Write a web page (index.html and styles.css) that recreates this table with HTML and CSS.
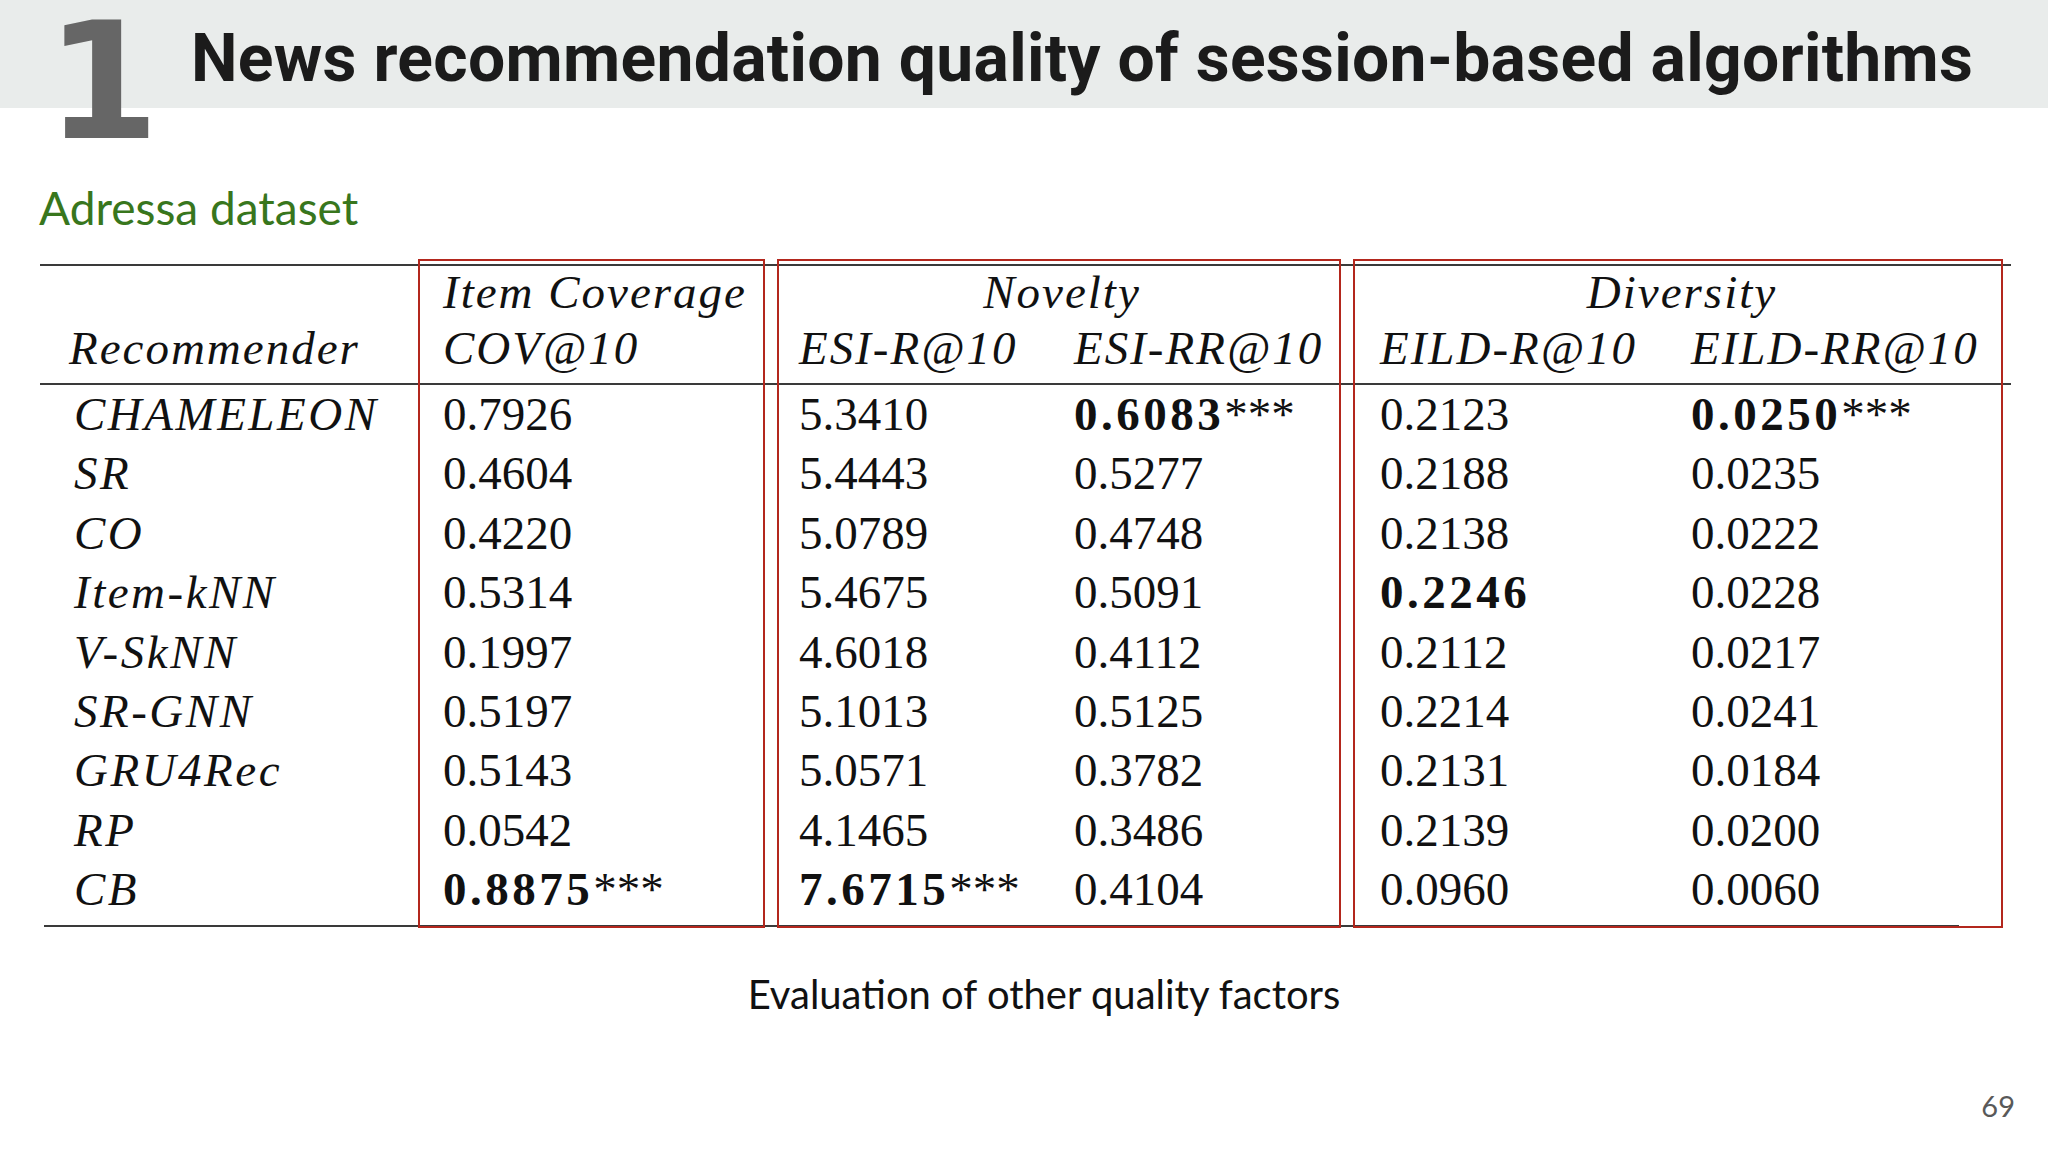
FILE: index.html
```html
<!DOCTYPE html>
<html lang="en">
<head>
<meta charset="utf-8">
<title>News recommendation quality of session-based algorithms</title>
<link rel="stylesheet" href="styles.css">
</head>
<body>
<div class="slide">
  <header class="header">
    <div class="num">1</div>
    <h1 class="title">News recommendation quality of session-based algorithms</h1>
  </header>

  <h2 class="subtitle">Adressa dataset</h2>

  <div class="table-wrap">
    <div class="rule rule-top"></div>
    <div class="grid head">
      <div class="cell"></div>
      <div class="cell">Item Coverage</div>
      <div class="cell group group-nov">Novelty</div>
      <div class="cell group group-div">Diversity</div>

      <div class="cell label-head row2">Recommender</div>
      <div class="cell row2">COV@10</div>
      <div class="cell row2">ESI-R@10</div>
      <div class="cell row2">ESI-RR@10</div>
      <div class="cell row2">EILD-R@10</div>
      <div class="cell row2">EILD-RR@10</div>
    </div>
    <div class="rule rule-mid"></div>
    <div class="grid body">
      <div class="cell label">CHAMELEON</div>
      <div class="cell num-cell">0.7926</div>
      <div class="cell num-cell">5.3410</div>
      <div class="cell num-cell"><b class="best">0.6083</b><span class="stars">***</span></div>
      <div class="cell num-cell">0.2123</div>
      <div class="cell num-cell"><b class="best">0.0250</b><span class="stars">***</span></div>

      <div class="cell label">SR</div>
      <div class="cell num-cell">0.4604</div>
      <div class="cell num-cell">5.4443</div>
      <div class="cell num-cell">0.5277</div>
      <div class="cell num-cell">0.2188</div>
      <div class="cell num-cell">0.0235</div>

      <div class="cell label">CO</div>
      <div class="cell num-cell">0.4220</div>
      <div class="cell num-cell">5.0789</div>
      <div class="cell num-cell">0.4748</div>
      <div class="cell num-cell">0.2138</div>
      <div class="cell num-cell">0.0222</div>

      <div class="cell label">Item-kNN</div>
      <div class="cell num-cell">0.5314</div>
      <div class="cell num-cell">5.4675</div>
      <div class="cell num-cell">0.5091</div>
      <div class="cell num-cell"><b class="best">0.2246</b></div>
      <div class="cell num-cell">0.0228</div>

      <div class="cell label">V-SkNN</div>
      <div class="cell num-cell">0.1997</div>
      <div class="cell num-cell">4.6018</div>
      <div class="cell num-cell">0.4112</div>
      <div class="cell num-cell">0.2112</div>
      <div class="cell num-cell">0.0217</div>

      <div class="cell label">SR-GNN</div>
      <div class="cell num-cell">0.5197</div>
      <div class="cell num-cell">5.1013</div>
      <div class="cell num-cell">0.5125</div>
      <div class="cell num-cell">0.2214</div>
      <div class="cell num-cell">0.0241</div>

      <div class="cell label">GRU4Rec</div>
      <div class="cell num-cell">0.5143</div>
      <div class="cell num-cell">5.0571</div>
      <div class="cell num-cell">0.3782</div>
      <div class="cell num-cell">0.2131</div>
      <div class="cell num-cell">0.0184</div>

      <div class="cell label">RP</div>
      <div class="cell num-cell">0.0542</div>
      <div class="cell num-cell">4.1465</div>
      <div class="cell num-cell">0.3486</div>
      <div class="cell num-cell">0.2139</div>
      <div class="cell num-cell">0.0200</div>

      <div class="cell label">CB</div>
      <div class="cell num-cell"><b class="best">0.8875</b><span class="stars">***</span></div>
      <div class="cell num-cell"><b class="best">7.6715</b><span class="stars">***</span></div>
      <div class="cell num-cell">0.4104</div>
      <div class="cell num-cell">0.0960</div>
      <div class="cell num-cell">0.0060</div>
    </div>
    <div class="rule rule-bottom"></div>

    <div class="box box-cov"></div>
    <div class="box box-nov"></div>
    <div class="box box-div"></div>
  </div>

  <p class="caption">Evaluation of other quality factors</p>

  <footer class="footer">
    <span class="page">69</span>
  </footer>
</div>
</body>
</html>
```

FILE: styles.css
```css
* {
  box-sizing: border-box;
}

html, body {
  margin: 0;
  padding: 0;
  background: #ffffff;
}

.slide {
  width: 2048px;
  height: 1152px;
  overflow: hidden;
  background: #ffffff;
  display: flex;
  flex-direction: column;
}

/* ---------- header band (grey band 108px, the big numeral hangs below it) ---------- */
.header {
  flex: 0 0 auto;
  background: linear-gradient(to bottom, #e9eceb 0, #e9eceb 108px, #ffffff 108px);
  display: flex;
  align-items: flex-start;
  padding-left: 46px;
}

.num {
  font-family: "DejaVu Sans", sans-serif;
  font-weight: 700;
  font-size: 163px;
  line-height: 163px;
  color: #666666;
  width: 145px;
  flex: 0 0 145px;
}

.title {
  margin: 0;
  padding-top: 21px;
  font-family: "Roboto", "Liberation Sans", sans-serif;
  font-weight: 700;
  font-size: 66px;
  line-height: 75px;
  color: #1b1b1b;
  white-space: nowrap;
  letter-spacing: 0.3px;
}

/* ---------- subtitle ---------- */
.subtitle {
  margin: 18px 0 0 39px;
  font-family: "Lato", "Liberation Sans", sans-serif;
  font-weight: 400;
  font-size: 46px;
  line-height: 54px;
  color: #38761d;
}

/* ---------- table ---------- */
.table-wrap {
  position: relative;
  margin: 29px 0 0 40px;
  width: 1971px;
  font-family: "Liberation Serif", "Times New Roman", serif;
  font-size: 47px;
  color: #111111;
}

.rule {
  height: 2px;
  background: #3a3a3a;
}

.rule-bottom {
  margin-left: 4px;
  width: 1915px;
}

.grid {
  display: grid;
  grid-template-columns: 403px 356px 275px 306px 311px 320px;
}

.head {
  font-style: italic;
  letter-spacing: 2px;
  line-height: 52px;
  padding-bottom: 5px;
}

.head .row2 {
  line-height: 60px;
}

.group {
  grid-column: span 2;
  text-align: center;
}

.group-nov {
  padding-right: 55px;
}

.group-div {
  padding-right: 27px;
}

.label-head {
  padding-left: 29px;
}

.body {
  line-height: 59.4px;
  padding-bottom: 5px;
}

.label {
  padding-left: 34px;
  font-style: italic;
  letter-spacing: 2.5px;
}

.cell {
  white-space: nowrap;
}

.best {
  font-weight: 700;
  letter-spacing: 3.5px;
}

.stars {
  font-weight: 400;
}

.box {
  position: absolute;
  top: -5px;
  height: 669px;
  border: 2px solid #b3271d;
}

.box-cov {
  left: 378px;
  width: 347px;
}

.box-nov {
  left: 737px;
  width: 564px;
}

.box-div {
  left: 1313px;
  width: 650px;
}

/* ---------- caption & footer ---------- */
.caption {
  margin: 44px 0 0 0;
  padding-left: 40px;
  text-align: center;
  font-family: "Lato", "Liberation Sans", sans-serif;
  font-size: 40px;
  line-height: 46px;
  color: #111111;
}

.footer {
  display: flex;
  justify-content: flex-end;
  margin-top: 71px;
  padding-right: 33px;
}

.page {
  font-family: "Lato", "Liberation Sans", sans-serif;
  font-size: 29px;
  line-height: 35px;
  color: #595959;
}
```
